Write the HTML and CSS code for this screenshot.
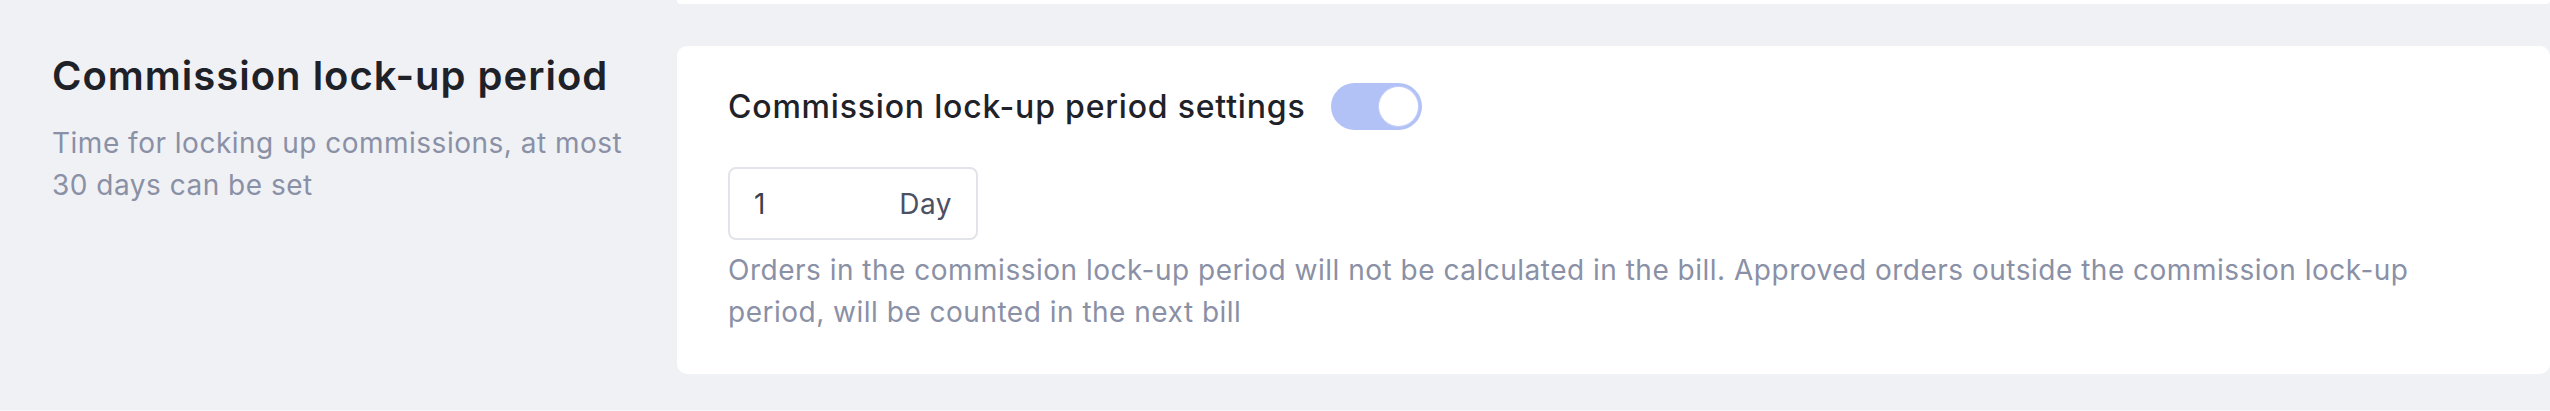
FILE: index.html
```html
<!DOCTYPE html>
<html lang="en">
<head>
    <meta charset="UTF-8">
    <meta name="viewport" content="width=device-width, initial-scale=1.0">
    <title>Commission lock-up period</title>
    <link rel="stylesheet" href="styles.css">
</head>
<body>
    <div class="prev-card"></div>
    <div class="section">
        <div class="section-info">
            <div class="section-title">Commission lock-up period</div>
            <div class="section-desc">Time for locking up commissions, at most 30 days can be set</div>
        </div>
        <div class="card">
            <div class="setting-row">
                <span class="setting-label">Commission lock-up period settings</span>
                <div class="switch on"><span class="switch-knob"></span></div>
            </div>
            <div class="day-input">
                <span class="day-value">1</span>
                <span class="day-unit">Day</span>
            </div>
            <div class="help-text">Orders in the commission lock-up period will not be calculated in the bill. Approved orders outside the commission lock-up period, will be counted in the next bill</div>
        </div>
    </div>
</body>
</html>
```

FILE: styles.css
```css
body {
    margin: 0;
    font-family: Inter, "Liberation Sans", Arial, sans-serif;
    background: #f0f1f5;
    height: 411px;
    box-sizing: border-box;
    border-bottom: 1px solid #f7f8fa;
}
.prev-card {
    height: 4px;
    margin-left: 677px;
    background: #fff;
    border-radius: 0 0 10px 10px;
}
.section {
    display: flex;
    margin-top: 42px;
}
.section-info {
    width: 677px;
    flex-shrink: 0;
    box-sizing: border-box;
    padding: 2px 40px 0 52px;
}
.section-title {
    font-size: 40px;
    line-height: 56px;
    font-weight: 600;
    letter-spacing: 1px;
    color: #1e2128;
}
.section-desc {
    margin-top: 18px;
    font-size: 28px;
    line-height: 42px;
    letter-spacing: 0.5px;
    color: #8a90a5;
}
.card {
    flex: 1;
    background: #fff;
    border-radius: 10px;
    padding: 37px 51px 40px 51px;
    height: 328px;
    box-sizing: border-box;
}
.setting-row {
    display: flex;
    align-items: center;
    height: 47px;
}
.setting-label {
    font-size: 32px;
    line-height: 44px;
    font-weight: 500;
    letter-spacing: 0.8px;
    color: #1f2229;
}
.switch {
    width: 91px;
    height: 47px;
    margin-left: 26px;
    border-radius: 24px;
    background: #dcdfe6;
    box-sizing: border-box;
    padding: 4px;
    display: flex;
}
.switch.on {
    background: #b3c2f6;
    justify-content: flex-end;
}
.switch-knob {
    width: 39px;
    height: 39px;
    border-radius: 50%;
    background: #fff;
    box-shadow: 0 0 0 1px #c3cff8;
}
.day-input {
    margin-top: 37px;
    width: 250px;
    height: 73px;
    box-sizing: border-box;
    border: 2px solid #e2e4ea;
    border-radius: 8px;
    display: flex;
    align-items: center;
    justify-content: space-between;
    padding: 0 24px;
    font-size: 28px;
    letter-spacing: 0.5px;
}
.day-value {
    color: #3c414d;
}
.day-unit {
    color: #4b5062;
}
.help-text {
    margin-top: 9px;
    max-width: 1740px;
    font-size: 28px;
    line-height: 42px;
    letter-spacing: 0.5px;
    color: #8a90a5;
}
```
